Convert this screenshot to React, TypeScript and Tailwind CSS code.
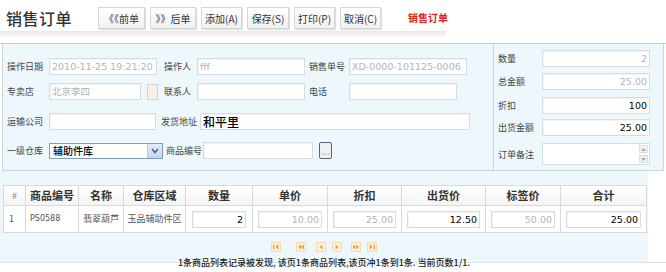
import React from "react";

const cjk = "font-['Noto_Sans_CJK_SC',sans-serif]";
const num = "font-['DejaVu_Sans','Noto_Sans_CJK_SC',sans-serif]";

function Label({ text, className = "" }: { text: string; className?: string }) {
  return (
    <div className={`shrink-0 text-[9px] leading-[17px] text-[#444] whitespace-nowrap ${cjk} ${className}`}>
      {text}
    </div>
  );
}

function Field({
  value = "",
  className = "",
  dim,
  right,
  big,
}: {
  value?: string;
  className?: string;
  dim?: boolean;
  right?: boolean;
  big?: boolean;
}) {
  return (
    <div
      className={`shrink-0 h-[17px] border border-[#d3dde3] bg-white px-[2px] overflow-hidden whitespace-nowrap shadow-[inset_1px_1px_1px_rgba(0,0,0,0.05)] ${
        right ? "text-right" : ""
      } ${big ? `text-[12px] leading-[15px] font-medium text-black ${cjk}` : `text-[9.5px] leading-[15px] ${num}`} ${
        dim ? "text-[#b4b4b4]" : "text-black"
      } ${className}`}
    >
      {value}
    </div>
  );
}

function TopButton({ text, w }: { text: string; w: string }) {
  return (
    <div
      className={`${w} h-[22px] shrink-0 flex items-center justify-center border border-[#d6d6d6] bg-gradient-to-b from-white to-[#f1f1f1] shadow-[1px_1px_1px_rgba(0,0,0,0.12)] text-[10px] text-[#333] ${cjk}`}
    >
      {text}
    </div>
  );
}

function PageIcon({ kind, className = "" }: { kind: string; className?: string }) {
  const c = "#f0a33a";
  return (
    <div className={`w-[10px] h-[10px] shrink-0 bg-[#fbf1dc] border border-[#f3dcb0] flex items-center justify-center ${className}`}>
      <svg width="8" height="8" viewBox="0 0 8 8">
        {kind === "first" && (
          <>
            <rect x="1" y="1.5" width="1.2" height="5" fill={c} />
            <path d="M6.5 1.5 L3 4 L6.5 6.5 Z" fill={c} />
          </>
        )}
        {kind === "prev2" && (
          <>
            <path d="M4 1.5 L1 4 L4 6.5 Z" fill={c} />
            <path d="M7 1.5 L4 4 L7 6.5 Z" fill={c} />
          </>
        )}
        {kind === "prev" && <path d="M5.5 1.5 L2.5 4 L5.5 6.5 Z" fill={c} />}
        {kind === "next" && <path d="M2.5 1.5 L5.5 4 L2.5 6.5 Z" fill={c} />}
        {kind === "next2" && (
          <>
            <path d="M1 1.5 L4 4 L1 6.5 Z" fill={c} />
            <path d="M4 1.5 L7 4 L4 6.5 Z" fill={c} />
          </>
        )}
        {kind === "last" && (
          <>
            <path d="M1.5 1.5 L5 4 L1.5 6.5 Z" fill={c} />
            <rect x="5.8" y="1.5" width="1.2" height="5" fill={c} />
          </>
        )}
      </svg>
    </div>
  );
}

const cols = [
  { h: "#", w: "w-[22px]" },
  { h: "商品编号", w: "w-[53px]" },
  { h: "名称", w: "w-[45px]" },
  { h: "仓库区域", w: "w-[62px]" },
  { h: "数量", w: "w-[67px]" },
  { h: "单价", w: "w-[75px]" },
  { h: "折扣", w: "w-[74px]" },
  { h: "出货价", w: "w-[84px]" },
  { h: "标签价", w: "w-[75px]" },
  { h: "合计", w: "w-[86px]" },
];

export default function App() {
  return (
    <div className={`w-[666px] h-[272px] bg-white overflow-hidden ${cjk}`}>
      {/* header */}
      <div className="h-[31px] flex items-start pl-[6px] pt-[7px]">
        <div className="w-[92px] text-[16px] leading-[22px] text-[#333] font-medium tracking-[0.5px]">销售订单</div>
        <div className="flex gap-[5px]">
          <TopButton text="《《前单" w="w-[47px]" />
          <TopButton text="》》后单" w="w-[46px]" />
          <TopButton text="添加(A)" w="w-[41px]" />
          <TopButton text="保存(S)" w="w-[42px]" />
          <TopButton text="打印(P)" w="w-[41px]" />
          <TopButton text="取消(C)" w="w-[41px]" />
        </div>
        <div className="ml-[27px] text-[10px] leading-[22px] font-bold text-[#e21b1b]">销售订单</div>
      </div>
      <div className="h-[6px] w-[446px] bg-gradient-to-b from-[#e9e9e9] to-[#f8f8f8]" />
      <div className="h-[6px]" />

      {/* form panels */}
      <div className="flex h-[128px] border-t border-[#c4cdd3]">
        <div className="ml-[2px] w-[492px] border-x border-b border-[#cbd5db] bg-[#eef8fc] flex flex-col">
          <div className="mt-[14px] flex items-center">
            <Label text="操作日期" className="w-[46px] pl-[4px]" />
            <Field value="2010-11-25 19:21:20" dim className="w-[108px]" />
            <Label text="操作人" className="w-[40px] pl-[7px]" />
            <Field value="fff" dim className="w-[108px]" />
            <Label text="销售单号" className="w-[44px] pl-[4px]" />
            <Field value="XD-0000-101125-0006" dim className="w-[118px]" />
          </div>
          <div className="mt-[8px] flex items-center">
            <Label text="专卖店" className="w-[46px] pl-[4px]" />
            <Field value="北京李四" dim className={`w-[92px] ${cjk}`} />
            <div className="ml-[6px] w-[11px] h-[16px] shrink-0 border border-[#d8d2c0] bg-[#f6f1e4]" />
            <Label text="联系人" className="w-[39px] pl-[6px]" />
            <Field className="w-[108px]" />
            <Label text="电话" className="w-[44px] pl-[4px]" />
            <Field className="w-[108px]" />
          </div>
          <div className="mt-[13px] flex items-center">
            <Label text="运输公司" className="w-[46px] pl-[4px]" />
            <Field className="w-[107px]" />
            <Label text="发货地址" className="w-[44px] pl-[5px]" />
            <Field value="和平里" big className="w-[270px]" />
          </div>
          <div className="mt-[12px] flex items-center">
            <Label text="一级仓库" className="w-[46px] pl-[4px]" />
            <div className="w-[114px] h-[16px] shrink-0 flex border border-[#7f9db9] bg-white">
              <div className="flex-1 text-[10px] leading-[14px] pl-[3px] text-black font-medium">辅助件库</div>
              <div className="w-[15px] h-[14px] bg-gradient-to-b from-[#e4ecf8] to-[#c5d5f0] border-l border-[#b8c9e6] flex items-center justify-center">
                <svg width="8" height="6" viewBox="0 0 8 6">
                  <path d="M1 1 L4 4.5 L7 1" stroke="#4d6185" strokeWidth="1.6" fill="none" />
                </svg>
              </div>
            </div>
            <Label text="商品编号" className="w-[40px] pl-[3px]" />
            <Field className="w-[110px]" />
            <div className="ml-[6px] w-[13px] h-[17px] shrink-0 rounded-[2px] border border-[#56667a] bg-[#eef1f5] flex items-end justify-center pb-[3px]">
              <svg width="8" height="2" viewBox="0 0 8 2">
                <circle cx="1" cy="1" r="0.7" fill="#e0893a" />
                <circle cx="4" cy="1" r="0.7" fill="#e0893a" />
                <circle cx="7" cy="1" r="0.7" fill="#e0893a" />
              </svg>
            </div>
          </div>
        </div>

        <div className="w-[170px] border-r border-b border-[#cbd5db] bg-[#eef8fc] flex flex-col">
          <div className="mt-[6px] flex items-center">
            <Label text="数量" className="w-[48px] pl-[4px]" />
            <Field value="2" dim right className="w-[108px]" />
          </div>
          <div className="mt-[6px] flex items-center">
            <Label text="总金额" className="w-[48px] pl-[4px]" />
            <Field value="25.00" dim right className="w-[108px]" />
          </div>
          <div className="mt-[7px] flex items-center">
            <Label text="折扣" className="w-[48px] pl-[4px]" />
            <Field value="100" right className="w-[108px]" />
          </div>
          <div className="mt-[5px] flex items-center">
            <Label text="出货金额" className="w-[48px] pl-[4px]" />
            <Field value="25.00" right className="w-[108px]" />
          </div>
          <div className="mt-[7px] flex items-center">
            <Label text="订单备注" className="w-[48px] pl-[4px]" />
            <div className="w-[108px] h-[22px] shrink-0 border border-[#d3dde3] bg-white flex justify-end">
              <div className="w-[9px] flex flex-col justify-between py-[1px] mr-[1px]">
                <div className="h-[8px] bg-[#f1f1f1] border border-[#ddd] flex items-center justify-center">
                  <svg width="5" height="3" viewBox="0 0 5 3"><path d="M0 3 L2.5 0 L5 3 Z" fill="#aaa" /></svg>
                </div>
                <div className="h-[8px] bg-[#f1f1f1] border border-[#ddd] flex items-center justify-center">
                  <svg width="5" height="3" viewBox="0 0 5 3"><path d="M0 0 L2.5 3 L5 0 Z" fill="#aaa" /></svg>
                </div>
              </div>
            </div>
          </div>
        </div>
      </div>

      {/* detail list */}
      <div className="w-[648px] h-[91px] bg-[#eef8fc] flex flex-col">
        <table className="mt-[14px] ml-[3px] border-collapse table-fixed w-[643px]">
          <thead>
            <tr className="h-[20px] bg-gradient-to-b from-white to-[#f4f4f4]">
              {cols.map((c) => (
                <th
                  key={c.h}
                  className={`${c.w} border border-[#d4dadd] p-0 text-center ${
                    c.h === "#" ? "text-[9px] font-normal text-[#888]" : "text-[11px] font-bold text-[#333]"
                  }`}
                >
                  {c.h}
                </th>
              ))}
            </tr>
          </thead>
          <tbody>
            <tr className="h-[27px] bg-white text-[9px] text-[#555]">
              <td className="border border-[#d4dadd] pl-[5px]">1</td>
              <td className={`border border-[#d4dadd] pl-[4px] text-[8px] ${num}`}>PS0588</td>
              <td className="border border-[#d4dadd] text-center">翡翠葫芦</td>
              <td className="border border-[#d4dadd] text-center">玉品辅助件区</td>
              <td className="border border-[#d4dadd] px-[6px]">
                <Field value="2" right className="w-full" />
              </td>
              <td className="border border-[#d4dadd] px-[5px]">
                <Field value="10.00" dim right className="w-full" />
              </td>
              <td className="border border-[#d4dadd] px-[5px]">
                <Field value="25.00" dim right className="w-full" />
              </td>
              <td className="border border-[#d4dadd] px-[5px]">
                <Field value="12.50" right className="w-full" />
              </td>
              <td className="border border-[#d4dadd] px-[5px]">
                <Field value="50.00" dim right className="w-full" />
              </td>
              <td className="border border-[#d4dadd] px-[5px]">
                <Field value="25.00" right className="w-full" />
              </td>
            </tr>
          </tbody>
        </table>
        <div className="mt-[9px] flex justify-center">
          <div className="flex">
            <PageIcon kind="first" />
            <PageIcon kind="prev2" className="ml-[15px]" />
            <PageIcon kind="prev" className="ml-[10px]" />
            <PageIcon kind="next" className="ml-[6px]" />
            <PageIcon kind="next2" className="ml-[9px]" />
            <PageIcon kind="last" className="ml-[6px]" />
          </div>
        </div>
        <div className="mt-[5px] text-center text-[9px] leading-[11px] text-[#222] font-medium whitespace-nowrap">
          1条商品列表记录被发现, 该页1条商品列表,该页冲1条到1条. 当前页数1/1.
        </div>
      </div>
      <div className="h-[1px] w-[666px] bg-[#dde3e6]" />
    </div>
  );
}
